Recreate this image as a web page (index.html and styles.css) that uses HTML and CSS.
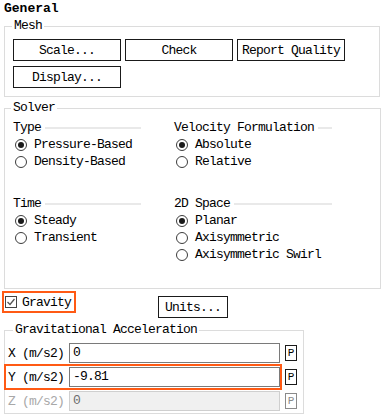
FILE: index.html
```html
<!DOCTYPE html>
<html>
<head>
<meta charset="utf-8">
<link rel="stylesheet" href="styles.css">
</head>
<body>
<div class="title">General</div>

<fieldset class="group mesh">
  <legend>Mesh</legend>
  <div class="btn-grid">
    <button class="btn">Scale...</button>
    <button class="btn">Check</button>
    <button class="btn">Report Quality</button>
    <button class="btn">Display...</button>
  </div>
</fieldset>

<fieldset class="group solver">
  <legend>Solver</legend>
  <div class="solver-grid">
    <div class="section">
      <div class="sec-head"><span>Type</span><i class="rule"></i></div>
      <div class="radio"><span class="circle on"></span>Pressure-Based</div>
      <div class="radio"><span class="circle"></span>Density-Based</div>
    </div>
    <div class="section">
      <div class="sec-head"><span>Velocity Formulation</span><i class="rule"></i></div>
      <div class="radio"><span class="circle on"></span>Absolute</div>
      <div class="radio"><span class="circle"></span>Relative</div>
    </div>
    <div class="section">
      <div class="sec-head"><span>Time</span><i class="rule"></i></div>
      <div class="radio"><span class="circle on"></span>Steady</div>
      <div class="radio"><span class="circle"></span>Transient</div>
    </div>
    <div class="section">
      <div class="sec-head"><span>2D Space</span><i class="rule"></i></div>
      <div class="radio"><span class="circle on"></span>Planar</div>
      <div class="radio"><span class="circle"></span>Axisymmetric</div>
      <div class="radio"><span class="circle"></span>Axisymmetric Swirl</div>
    </div>
  </div>
</fieldset>

<div class="gravity-row">
  <label class="gravity highlight">
    <span class="checkbox"><svg width="10" height="10" viewBox="0 0 10 10"><polyline points="1.5,5 4,7.5 8.5,2" fill="none" stroke="#555" stroke-width="1.3"/></svg></span>
    <span>Gravity</span>
  </label>
  <button class="btn units">Units...</button>
</div>

<fieldset class="group grav">
  <legend>Gravitational Acceleration</legend>
  <div class="row">
    <div class="field"><span class="lbl">X (m/s2)</span><div class="input">0</div></div>
    <span class="pbtn">P</span>
  </div>
  <div class="row">
    <div class="field highlight-line"><span class="lbl">Y (m/s2)</span><div class="input">-9.81</div></div>
    <span class="pbtn">P</span>
  </div>
  <div class="row disabled">
    <div class="field"><span class="lbl">Z (m/s2)</span><div class="input">0</div></div>
    <span class="pbtn">P</span>
  </div>
</fieldset>
</body>
</html>
```

FILE: styles.css
```css
* { box-sizing: border-box; }

body {
  margin: 0;
  background: #fff;
  color: #000;
  font-family: "Liberation Mono", "DejaVu Sans Mono", monospace;
  font-size: 13px;
  letter-spacing: -0.8px;
  line-height: 17px;
}

.title {
  font-weight: bold;
  letter-spacing: 0;
  padding-left: 4px;
  height: 17px;
}

.group {
  margin: 0 0 0 4px;
  border: 1px solid #dcdcdc;
  min-width: 0;
}

.group legend {
  line-height: 14px;
  padding: 0 2px;
}

.mesh {
  width: 376px;
  margin-top: 2px;
  padding: 6px 8px 8px 8px;
}
.mesh legend { margin-left: -1px; }

.btn-grid {
  display: grid;
  grid-template-columns: 108px 108px 108px;
  column-gap: 4px;
  row-gap: 5px;
}

.btn {
  font: inherit;
  letter-spacing: inherit;
  color: #000;
  background: #fff;
  border: 1px solid #1a1a1a;
  border-radius: 0;
  height: 22px;
  padding: 0;
  margin: 0;
  text-align: center;
}

.solver {
  width: 377px;
  margin-top: 4px;
  padding: 4px 8px 25px 8px;
}
.solver legend { margin-left: -2px; }

.solver-grid {
  display: grid;
  grid-template-columns: 128px 158px;
  column-gap: 33px;
  row-gap: 25px;
}

.sec-head {
  display: flex;
  align-items: center;
  height: 17px;
  gap: 4px;
}
.rule {
  flex: 1;
  height: 2px;
  background: #e9e9e9;
}

.radio {
  display: flex;
  align-items: center;
  height: 17px;
}
.circle {
  width: 12px;
  height: 12px;
  border: 1px solid #3c3c3c;
  border-radius: 50%;
  margin: 0 7px 0 2px;
  display: flex;
  align-items: center;
  justify-content: center;
  background: #fff;
}
.circle.on::after {
  content: "";
  width: 6px;
  height: 6px;
  border-radius: 50%;
  background: #1a1a1a;
}

.gravity-row {
  display: flex;
  align-items: flex-start;
  margin: 2px 0 0 2px;
}

.gravity {
  display: flex;
  align-items: center;
  width: 74px;
  height: 22px;
  border: 2px solid #ff5a14;
  padding-left: 1px;
  gap: 5px;
}
.checkbox {
  width: 12px;
  height: 12px;
  border: 1px solid #444;
  display: flex;
  align-items: center;
  justify-content: center;
}

.units {
  width: 70px;
  height: 22px;
  margin: 5px 0 0 82px;
}

.grav {
  width: 300px;
  margin-top: 5px;
  padding: 5px 6px 1px 1px;
}
.grav legend { margin-left: 7px; }

.row {
  display: flex;
  align-items: center;
  height: 22px;
  margin-bottom: 2px;
}
.row:last-child { margin-bottom: 0; }

.field {
  display: flex;
  align-items: center;
  width: 274px;
  height: 22px;
  padding-left: 2px;
}
.highlight-line {
  outline: 2px solid #ff5a14;
}

.lbl {
  width: 61px;
}

.input {
  width: 211px;
  height: 20px;
  border: 1px solid #7a7a7a;
  padding-left: 3px;
  line-height: 18px;
  background: #fff;
}

.pbtn {
  width: 12px;
  height: 16px;
  border: 1px solid #1a1a1a;
  margin-left: 5px;
  font-size: 11px;
  letter-spacing: 0;
  line-height: 14px;
  text-align: center;
}

.disabled .lbl { color: #a8a8a8; }
.disabled .input {
  background: #f0f0f0;
  border-color: #cfcfcf;
  color: #6d6d6d;
}
.disabled .pbtn {
  border-color: #8a8a8a;
  color: #8a8a8a;
}
```
